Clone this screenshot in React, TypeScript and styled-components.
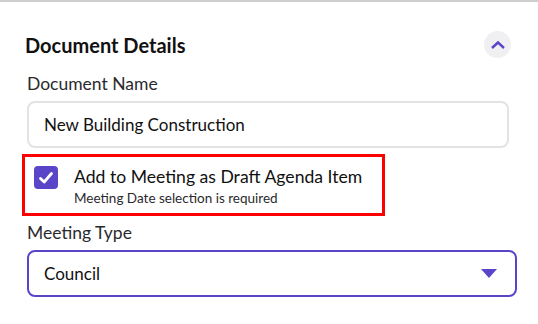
import React from 'react';
import styled, { createGlobalStyle } from 'styled-components';

const PURPLE = '#5a45c8';

const GlobalStyle = createGlobalStyle`
  html, body {
    margin: 0;
    padding: 0;
    background: #ffffff;
    font-family: Lato, "Open Sans", sans-serif;
    color: #1d1d1f;
  }
`;

const Panel = styled.div`
  box-sizing: border-box;
  width: 538px;
  height: 324px;
  border-top: 2px solid #cfcfcf;
  padding: 29px 0 0 27px;
  display: flex;
  flex-direction: column;
`;

const Header = styled.div`
  display: flex;
  align-items: center;
  justify-content: space-between;
  width: 486px;
  margin-left: -2px;
  height: 27px;
`;

const Title = styled.h2`
  margin: 0;
  font-size: 20px;
  font-weight: 700;
  color: #111;
`;

const CollapseButton = styled.button`
  width: 27px;
  height: 27px;
  border-radius: 50%;
  border: none;
  background: #f0f0f2;
  padding: 0;
  display: flex;
  align-items: center;
  justify-content: center;
`;

const Label = styled.div<{ $top: number }>`
  margin-top: ${(p) => p.$top}px;
  font-size: 17.5px;
  line-height: 22px;
  color: #2a2a2e;
`;

const Field = styled.div<{ $width: number; $active?: boolean }>`
  box-sizing: border-box;
  width: ${(p) => p.$width}px;
  height: 47px;
  margin-top: 6px;
  border: 2px solid ${(p) => (p.$active ? PURPLE : '#e3e3e3')};
  border-radius: 8px;
  padding: 0 18px 0 15px;
  display: flex;
  align-items: center;
  justify-content: space-between;
  font-size: 17px;
  color: #111;
`;

const Highlight = styled.div`
  box-sizing: border-box;
  width: 363px;
  height: 62px;
  margin: 6px 0 0 -5px;
  border: 3px solid #ff0000;
  padding: 9px 0 0 9px;
  display: flex;
  gap: 16px;
`;

const CheckBox = styled.span`
  width: 24px;
  height: 23px;
  border-radius: 4px;
  background: ${PURPLE};
  display: flex;
  align-items: center;
  justify-content: center;
  flex-shrink: 0;
`;

const CheckText = styled.div`
  display: flex;
  flex-direction: column;
`;

const CheckTitle = styled.span`
  font-size: 17.6px;
  line-height: 22px;
  color: #111;
`;

const CheckHint = styled.span`
  font-size: 13.5px;
  line-height: 17px;
  margin-top: 2px;
  color: #2a2a2e;
`;

export default function App() {
  return (
    <>
      <GlobalStyle />
      <Panel>
        <Header>
          <Title>Document Details</Title>
          <CollapseButton aria-label="collapse">
            <svg width="16" height="10" viewBox="0 0 16 10">
              <path d="M2 8 L8 2.5 L14 8" fill="none" stroke={PURPLE} strokeWidth="2.4" />
            </svg>
          </CollapseButton>
        </Header>

        <Label $top={15}>Document Name</Label>
        <Field $width={482}>New Building Construction</Field>

        <Highlight>
          <CheckBox>
            <svg width="16" height="14" viewBox="0 0 16 14">
              <path d="M2.5 7.5 L6.2 11 L13.5 2.5" fill="none" stroke="#fff" strokeWidth="2.8" strokeLinecap="round" strokeLinejoin="round" />
            </svg>
          </CheckBox>
          <CheckText>
            <CheckTitle>Add to Meeting as Draft Agenda Item</CheckTitle>
            <CheckHint>Meeting Date selection is required</CheckHint>
          </CheckText>
        </Highlight>

        <Label $top={6}>Meeting Type</Label>
        <Field $width={490} $active>
          Council
          <svg width="16" height="9" viewBox="0 0 16 9">
            <path d="M0 0 H16 L8 9 Z" fill={PURPLE} />
          </svg>
        </Field>
      </Panel>
    </>
  );
}
